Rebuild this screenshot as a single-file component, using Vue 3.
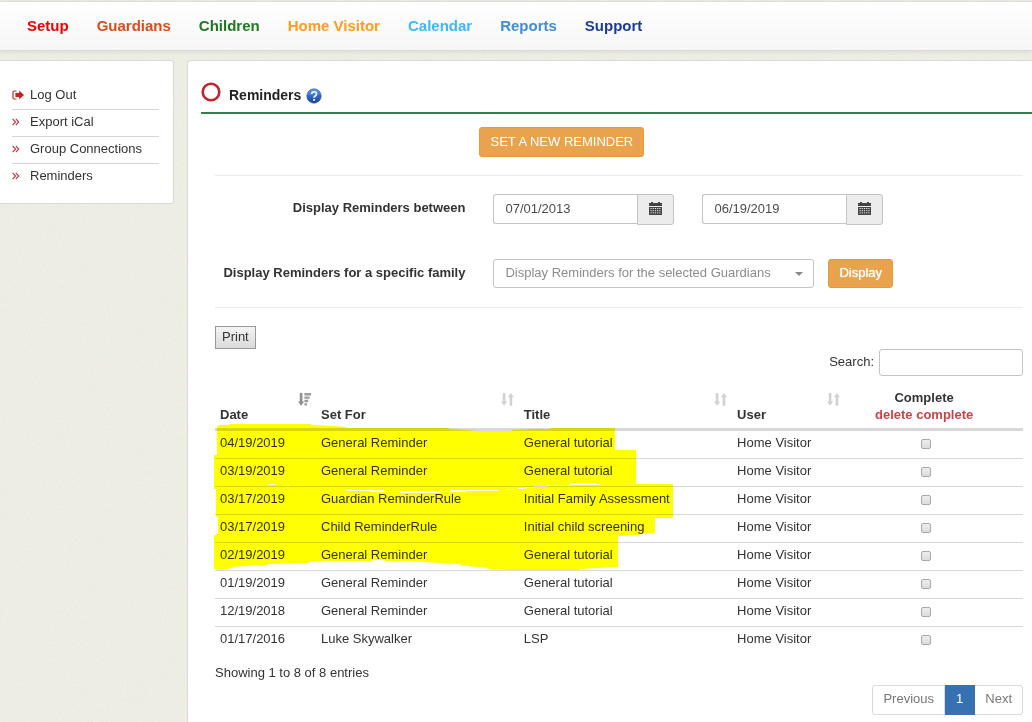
<script setup>
import { ref } from 'vue'

const navItems = [
  { label: 'Setup', tone: 'setup' },
  { label: 'Guardians', tone: 'guardians' },
  { label: 'Children', tone: 'children' },
  { label: 'Home Visitor', tone: 'visitor' },
  { label: 'Calendar', tone: 'calendar' },
  { label: 'Reports', tone: 'reports' },
  { label: 'Support', tone: 'support' },
]

const sideItems = ['Export iCal', 'Group Connections', 'Reminders']

const dateFrom = ref('07/01/2013')
const dateTo = ref('06/19/2019')
const family = ref('')
const search = ref('')

const columns = [
  { key: 'date', label: 'Date', sorted: true },
  { key: 'for', label: 'Set For', sorted: false },
  { key: 'title', label: 'Title', sorted: false },
  { key: 'user', label: 'User', sorted: false },
]

const rows = ref([
  { date: '04/19/2019', setFor: 'General Reminder', title: 'General tutorial', done: false },
  { date: '03/19/2019', setFor: 'General Reminder', title: 'General tutorial', done: false },
  { date: '03/17/2019', setFor: 'Guardian ReminderRule', title: 'Initial Family Assessment', done: false },
  { date: '03/17/2019', setFor: 'Child ReminderRule', title: 'Initial child screening', done: false },
  { date: '02/19/2019', setFor: 'General Reminder', title: 'General tutorial', done: false },
  { date: '01/19/2019', setFor: 'General Reminder', title: 'General tutorial', done: false },
  { date: '12/19/2018', setFor: 'General Reminder', title: 'General tutorial', done: false },
  { date: '01/17/2016', setFor: 'Luke Skywalker', title: 'LSP', done: false },
])
</script>

<template>
  <div class="page">
    <svg class="grain" aria-hidden="true">
      <filter id="paper" x="0" y="0" width="100%" height="100%">
        <feTurbulence type="fractalNoise" baseFrequency="0.45" numOctaves="2" seed="4" />
        <feColorMatrix values="1 0 0 0 0  0 1 0 0 0  0 0 1 0 0  0 0 0 0 0.06" />
      </filter>
      <rect width="100%" height="100%" filter="url(#paper)" />
    </svg>

    <header class="topbar">
      <nav class="nav">
        <a v-for="item in navItems" :key="item.label" href="#" :class="item.tone">{{ item.label }}</a>
      </nav>
    </header>

    <div class="columns">
      <aside class="sidebar">
        <ul>
          <li>
            <a href="#">
              <svg class="logout" viewBox="0 0 12 10" aria-hidden="true">
                <path d="M4.5 1H2.2Q1 1 1 2.2v5.6Q1 9 2.2 9H4.5" fill="none" stroke="#c42a22" stroke-width="1.2" />
                <path d="M3.4 3.1h3.8V.6L12 5 7.2 9.4V6.9H3.4z" fill="#c9201c" />
              </svg>
              <span>Log Out</span>
            </a>
          </li>
          <li v-for="item in sideItems" :key="item">
            <a href="#">
              <svg class="chevrons" viewBox="0 0 8 8" aria-hidden="true">
                <path d="M.6.8 3.6 4 .6 7.2M3.8.8 6.8 4 3.8 7.2" fill="none" stroke="#c9303f" stroke-width="1.1" />
              </svg>
              <span>{{ item }}</span>
            </a>
          </li>
        </ul>
      </aside>

      <main class="panel">
        <div class="heading">
          <svg class="ring" viewBox="0 0 20 20" aria-hidden="true">
            <circle cx="10" cy="10" r="8.3" fill="none" stroke="#c0242d" stroke-width="2.6" />
          </svg>
          <h1>Reminders</h1>
          <button class="help" type="button" aria-label="Help">
            <svg viewBox="0 0 16 16" aria-hidden="true">
              <defs>
                <linearGradient id="helpFill" x1="0" y1="0" x2="0" y2="1">
                  <stop offset="0" stop-color="#6fa0ea" />
                  <stop offset=".5" stop-color="#2f68cf" />
                  <stop offset="1" stop-color="#1b3f9c" />
                </linearGradient>
              </defs>
              <circle cx="8" cy="8" r="7.2" fill="url(#helpFill)" stroke="#234c9f" stroke-width=".6" />
              <path d="M5.6 6.2Q5.7 3.9 8.1 3.9T10.5 6q0 1.2-1.2 1.9Q8.1 8.6 8.1 9.7" fill="none" stroke="#e8eefc" stroke-width="1.8" />
              <circle cx="8.1" cy="11.9" r="1.1" fill="#e8eefc" />
            </svg>
          </button>
        </div>

        <div class="body">
          <div class="new-row">
            <button class="btn" type="button">SET A NEW REMINDER</button>
          </div>

          <form class="filters" @submit.prevent>
            <div class="field">
              <label for="from">Display Reminders between</label>
              <div class="date">
                <input id="from" v-model="dateFrom" type="text" />
                <button type="button" aria-label="Choose start date">
                  <svg viewBox="0 0 13 13" aria-hidden="true">
                    <path d="M0 1h2V0h2v1h5V0h2v1h2v3H0z" fill="#444" />
                    <path d="M0 5h13v8H0z" fill="#444" />
                    <path d="M1.5 6.5h10M1.5 8.7h10M1.5 10.9h10" stroke="#eee" stroke-width="1" stroke-dasharray="1.2 1" />
                  </svg>
                </button>
              </div>
              <div class="date">
                <input v-model="dateTo" type="text" aria-label="End date" />
                <button type="button" aria-label="Choose end date">
                  <svg viewBox="0 0 13 13" aria-hidden="true">
                    <path d="M0 1h2V0h2v1h5V0h2v1h2v3H0z" fill="#444" />
                    <path d="M0 5h13v8H0z" fill="#444" />
                    <path d="M1.5 6.5h10M1.5 8.7h10M1.5 10.9h10" stroke="#eee" stroke-width="1" stroke-dasharray="1.2 1" />
                  </svg>
                </button>
              </div>
            </div>
            <div class="field family">
              <label for="family">Display Reminders for a specific family</label>
              <div class="select">
                <select id="family" v-model="family">
                  <option value="">Display Reminders for the selected Guardians</option>
                </select>
                <svg viewBox="0 0 8 4" aria-hidden="true"><path d="M0 0h8L4 4z" fill="#888" /></svg>
              </div>
              <button class="btn strong" type="submit">Display</button>
            </div>
          </form>

          <div class="tools">
            <button class="print" type="button">Print</button>
          </div>
          <div class="search">
            <label for="search">Search:</label>
            <input id="search" v-model="search" type="text" />
          </div>

          <div class="table-wrap">
            <table>
              <colgroup>
                <col class="c-date" /><col class="c-for" /><col class="c-title" /><col class="c-user" /><col />
              </colgroup>
              <thead>
                <tr>
                  <th v-for="col in columns" :key="col.key" scope="col">
                    <div class="th">
                      <span>{{ col.label }}</span>
                      <svg v-if="col.sorted" viewBox="0 0 13 13" aria-hidden="true">
                        <path d="M1.8 0h2.6v8.6h1.8L3.1 12.8 0 8.6h1.8z" fill="#909090" />
                        <path d="M6.4 0H13v2.4H6.4zM6.4 3.4h5.2v2.4H6.4zM6.4 6.8h3.8v2.4H6.4zM6.4 10.2H9v2.4H6.4z" fill="#9c9c9c" />
                      </svg>
                      <svg v-else viewBox="0 0 13 13" aria-hidden="true">
                        <path d="M1.8 0h2.6v8.6h1.8L3.1 12.8 0 8.6h1.8zM8.6 12.8h2.6V4.2H13L9.9 0 6.8 4.2h1.8z" fill="#d2d2d2" />
                      </svg>
                    </div>
                  </th>
                  <th class="complete" scope="col">Complete<br /><a href="#">delete complete</a></th>
                </tr>
              </thead>
              <tbody>
                <tr v-for="(row, i) in rows" :key="i">
                  <td>{{ row.date }}</td>
                  <td>{{ row.setFor }}</td>
                  <td>{{ row.title }}</td>
                  <td>Home Visitor</td>
                  <td class="tick">
                    <input v-model="row.done" type="checkbox" :aria-label="`Complete reminder of ${row.date}`" />
                  </td>
                </tr>
              </tbody>
            </table>
            <svg class="marker" viewBox="214 389 460 182" aria-hidden="true">
              <path
                fill="#ff0"
                d="M217 427L219 425H229V424H311V425L333 426L346 427V428H449V429L465 430L478 431H512V430L532 429H550V428H615V450H636V484H673V518H655V533L640 534V535L618 536V567L598 568L580 569V570H508L488 569V568L478 567L460 565V564L440 563L425 562L401 561H385V560H373V561H330L309 562V563L268 564V565L245 566L233 567L228 569H214V536L218 533V517H216V489H214V455H217Z"
              />
              <path fill="#fff" d="M346 489h5v1h33v1h66v-1h49v1h-33v1h-26v1h-40v-1h-30v-1h-24z M507 489h7v1h-7z M518 488h7v-1h9v-1h13v-1h23v-2h26v1h4v1h-30v1h-23v1h-14v1h-8v1h-7z M269 484h6v1h-6zM283 485h6v1h-6z" />
            </svg>
          </div>

          <p class="info">Showing 1 to 8 of 8 entries</p>
          <nav class="pager" aria-label="Pages">
            <a href="#">Previous</a>
            <a href="#" class="current" aria-current="page">1</a>
            <a href="#">Next</a>
          </nav>
        </div>
      </main>
    </div>
  </div>
</template>

<style>
body {
  background: #f0f0e6;
}
</style>

<style scoped>
* {
  box-sizing: border-box;
}

.page {
  font-family: "Liberation Sans", Arial, sans-serif;
  font-size: 13px;
  line-height: 18px;
  color: #333;
  min-height: 100vh;
  padding-top: 1px;
  position: relative;
  overflow: hidden;
}

.grain {
  position: absolute;
  inset: 0;
  width: 100%;
  height: 100%;
}

a {
  color: inherit;
  text-decoration: none;
}

button,
input,
select {
  font: inherit;
  color: inherit;
  margin: 0;
}

.topbar {
  position: relative;
  height: 50px;
  border-top: 1px solid #ddd;
  border-bottom: 1px solid #dadada;
  background: linear-gradient(#fff, #f6f6f6);
  box-shadow: 0 1px 4px rgba(0, 0, 0, 0.08);
}

.nav {
  display: flex;
  align-items: center;
  gap: 28px;
  height: 48px;
  padding-left: 27px;
  font-size: 15px;
  font-weight: bold;
}

.setup { color: #f00000; }
.guardians { color: #dc4a1c; }
.children { color: #1e7820; }
.visitor { color: #ff9c20; }
.calendar { color: #3cb8fb; }
.reports { color: #408cd6; }
.support { color: #1d3c98; }

.columns {
  position: relative;
  display: flex;
  align-items: flex-start;
  gap: 13px;
  padding-top: 9px;
}

.sidebar {
  flex: none;
  width: 174px;
  border: 1px solid #d8d8d8;
  border-left: 0;
  border-radius: 0 3px 3px 0;
  background: #fff;
  padding: 21px 14px 13px 12px;
}

ul {
  list-style: none;
  margin: 0;
  padding: 0;
}

li + li {
  border-top: 1px solid #d6d6d6;
}

li a {
  display: flex;
  align-items: center;
  height: 26px;
  padding-bottom: 2px;
}

li:first-child a {
  height: 27px;
}

li span {
  margin-left: auto;
  flex: 0 0 calc(100% - 18px);
}

.logout {
  width: 12px;
  height: 10px;
}

.chevrons {
  width: 8px;
  height: 8px;
}

.panel {
  flex: 1;
  min-width: 0;
  border: 1px solid #d8d8d8;
  border-right: 0;
  border-radius: 3px 0 0 3px;
  background: #fff;
  padding: 20px 0 20px 13px;
}

.heading {
  display: flex;
  align-items: flex-start;
  height: 33px;
  border-bottom: 2px solid #2f804d;
}

.ring {
  width: 20px;
  height: 20px;
  margin-top: 1px;
}

h1 {
  font-size: 14px;
  line-height: 18px;
  margin: 5px 5px 0 8px;
  color: #222;
}

.help {
  display: flex;
  margin-top: 7px;
  border: 0;
  background: none;
  padding: 0;
}

.help svg {
  width: 16px;
  height: 16px;
}

.body {
  padding: 13px 9px 0 14px;
}

.btn {
  height: 30px;
  padding: 0 10px 1px;
  border: 1px solid #e69a3c;
  border-radius: 3px;
  background: #e9a34c;
  color: #fff;
  white-space: nowrap;
}

.strong {
  height: 29px;
  text-shadow: 0 0 1px #fff;
}

.new-row {
  padding: 0 0 18px calc(31% + 14px);
  border-bottom: 1px solid #eaeaea;
}

.filters {
  padding: 18px 0 19px;
  border-bottom: 1px solid #eaeaea;
}

.field {
  display: flex;
  align-items: flex-start;
}

.field + .field {
  margin-top: 34px;
}

.field label {
  flex: 0 0 31%;
  margin-right: 28px;
  padding-top: 5px;
  text-align: right;
  font-weight: bold;
  white-space: nowrap;
}

.date {
  display: flex;
  flex: 0 1 181px;
  min-width: 0;
}

.date + .date {
  margin-left: 28px;
}

.date input {
  flex: 1;
  min-width: 0;
  height: 30px;
  padding: 0 11px 2px;
  border: 1px solid #c4c4c4;
  border-right: 0;
  border-radius: 3px 0 0 3px;
  background: #fff;
  color: #4c4c4c;
}

.date button {
  display: flex;
  flex: none;
  align-items: center;
  justify-content: center;
  width: 37px;
  height: 31px;
  padding: 0 0 2px;
  border: 1px solid #c4c4c4;
  border-radius: 0 3px 3px 0;
  background: #ececec;
}

.date svg {
  width: 13px;
  height: 13px;
}

.select {
  position: relative;
  flex: 0 1 321px;
  min-width: 0;
  margin-right: 14px;
}

.select select {
  appearance: none;
  display: block;
  width: 100%;
  height: 29px;
  padding: 0 11px 2px;
  border: 1px solid #c4c4c4;
  border-radius: 3px;
  background: #fff;
  color: #8c8c8c;
}

.select svg {
  position: absolute;
  right: 11px;
  top: 13px;
  width: 8px;
  height: 4px;
  pointer-events: none;
}

.tools {
  display: flex;
  padding-top: 18px;
}

.print {
  height: 23px;
  padding: 0 6px 2px;
  border: 1px solid #999;
  border-radius: 0;
  background: linear-gradient(#f4f4f4, #dadada);
}

.search {
  display: flex;
  justify-content: flex-end;
  gap: 5px;
}

.search label {
  padding-top: 4px;
}

.search input {
  width: 144px;
  height: 27px;
  padding: 0 8px;
  border: 1px solid #c4c4c4;
  border-radius: 3px;
  background: #fff;
}

.table-wrap {
  position: relative;
  padding-top: 13px;
}

table {
  width: 100%;
  table-layout: fixed;
  border-collapse: separate;
  border-spacing: 0;
}

.c-date { width: 12.5%; }
.c-for { width: 25.1%; }
.c-title { width: 26.4%; }
.c-user { width: 14%; }

th {
  padding: 0 5px 5px;
  border-bottom: 3px solid #d8d8d8;
  line-height: 17px;
  text-align: left;
  vertical-align: bottom;
}

.th {
  display: flex;
  justify-content: space-between;
  align-items: flex-end;
}

.th svg {
  width: 13px;
  height: 13px;
  margin-bottom: 17px;
}

.complete {
  padding-right: 25px;
  text-align: center;
}

.complete a {
  color: #cb4349;
}

td {
  height: 28px;
  padding: 3px 5px 6px;
  border-bottom: 1px solid #d8d8d8;
  white-space: nowrap;
}

tr:last-child td {
  border-bottom-color: transparent;
}

.tick {
  padding-right: 22px;
  text-align: center;
}

.tick input {
  appearance: none;
  display: block;
  width: 10px;
  height: 10px;
  margin: 2px auto 0;
  border: 1px solid #a8a8a8;
  border-radius: 2px;
  background: linear-gradient(#eee, #dcdcdc);
}

.tick input:checked {
  background: #3771b1;
}

.marker {
  position: absolute;
  left: -1px;
  top: 13px;
  width: 460px;
  height: 182px;
  mix-blend-mode: multiply;
  pointer-events: none;
}

.info {
  margin: 9px 0 3px;
}

.pager {
  display: flex;
  justify-content: flex-end;
}

.pager a {
  height: 30px;
  padding: 4px 10px;
  border: 1px solid #dadada;
  border-left-width: 0;
  background: #fff;
  color: #777;
}

.pager a:first-child {
  border-left-width: 1px;
  border-radius: 3px 0 0 3px;
}

.pager a:last-child {
  border-radius: 0 3px 3px 0;
}

.pager .current {
  padding: 4px 11px;
  border-color: #3771b1;
  background: #3771b1;
  color: #fff;
}
</style>
